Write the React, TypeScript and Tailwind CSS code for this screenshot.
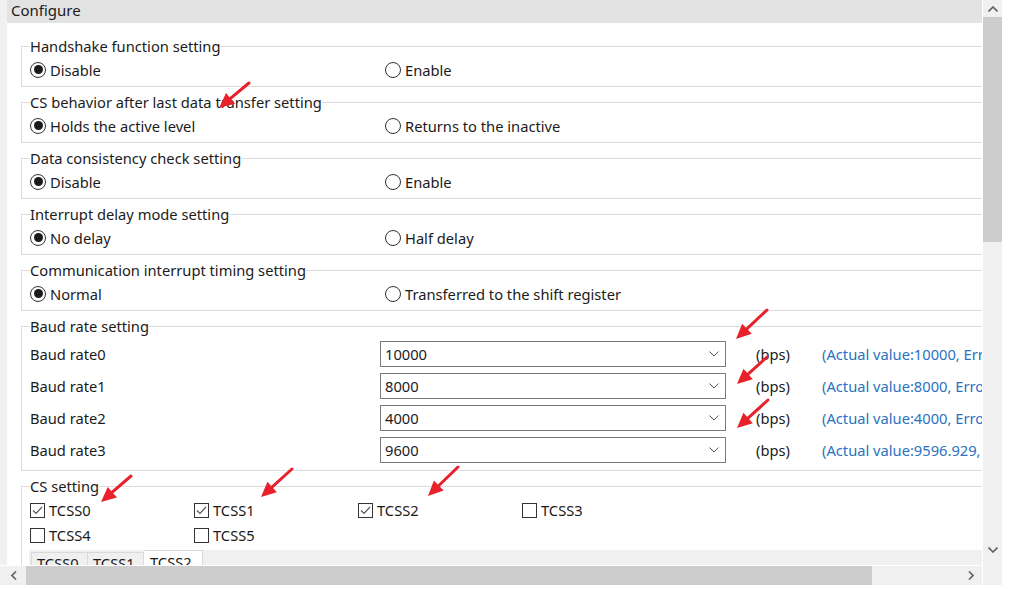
import React from "react";

const radioGroups = [
  { title: "Handshake function setting", a: "Disable", b: "Enable" },
  { title: "CS behavior after last data transfer setting", a: "Holds the active level", b: "Returns to the inactive" },
  { title: "Data consistency check setting", a: "Disable", b: "Enable" },
  { title: "Interrupt delay mode setting", a: "No delay", b: "Half delay" },
  { title: "Communication interrupt timing setting", a: "Normal", b: "Transferred to the shift register" },
];

const baudRates = [
  { label: "Baud rate0", value: "10000", actual: "(Actual value:10000, Error:0%)" },
  { label: "Baud rate1", value: "8000", actual: "(Actual value:8000, Error:0%)" },
  { label: "Baud rate2", value: "4000", actual: "(Actual value:4000, Error:0%)" },
  { label: "Baud rate3", value: "9600", actual: "(Actual value:9596.929, Error:-0.03%)" },
];

const csChecks = [
  { name: "TCSS0", on: true },
  { name: "TCSS1", on: true },
  { name: "TCSS2", on: true },
  { name: "TCSS3", on: false },
  { name: "TCSS4", on: false },
  { name: "TCSS5", on: false },
];

// red annotation arrows: tail -> tip
const arrows = [
  [249, 83, 219, 108],
  [767, 310, 736, 339],
  [767, 357, 737, 384],
  [768, 400, 737, 428],
  [131, 476, 101, 502],
  [292, 469, 261, 497],
  [458, 467, 428, 496],
];

function Radio({ checked, label }: { checked?: boolean; label: string }) {
  return (
    <div className="flex items-center gap-[4px]">
      <span className="flex h-[16px] w-[16px] items-center justify-center rounded-full border border-[#333]">
        {checked && <span className="h-[9px] w-[9px] rounded-full bg-[#1b1b1b]" />}
      </span>
      <span>{label}</span>
    </div>
  );
}

function Check({ checked, label }: { checked?: boolean; label: string }) {
  return (
    <div className="flex items-center gap-[4px]">
      <span className="flex h-[15px] w-[15px] items-center justify-center border border-[#333] bg-white">
        {checked && (
          <svg width="11" height="9" viewBox="0 0 11 9">
            <polyline points="1,4.5 4,7.5 10,1" fill="none" stroke="#555" strokeWidth="1.2" />
          </svg>
        )}
      </span>
      <span>{label}</span>
    </div>
  );
}

function Group({ title, className, children }: { title: string; className: string; children: React.ReactNode }) {
  return (
    <fieldset className={"w-[1000px] shrink-0 border border-[#dcdcdc] pl-[8px] " + className}>
      <legend className="px-0 leading-[20px]">{title}</legend>
      {children}
    </fieldset>
  );
}

function Arrow({ t }: { t: number[] }) {
  const [x1, y1, x2, y2] = t;
  const dx = x2 - x1;
  const dy = y2 - y1;
  const len = Math.hypot(dx, dy);
  const ux = dx / len;
  const uy = dy / len;
  const hl = 15;
  const hw = 7;
  const bx = x2 - ux * hl;
  const by = y2 - uy * hl;
  const p1 = `${bx - uy * hw},${by + ux * hw}`;
  const p2 = `${bx + uy * hw},${by - ux * hw}`;
  return (
    <g>
      <line x1={x1} y1={y1} x2={bx + ux * 2} y2={by + uy * 2} stroke="#e8212b" strokeWidth="3" strokeLinecap="round" />
      <polygon points={`${x2},${y2} ${p1} ${p2}`} fill="#e8212b" />
    </g>
  );
}

export default function App() {
  return (
    <div className="relative h-[589px] w-[1009px] overflow-hidden bg-white font-['Noto_Sans'] text-[14.7px] text-[#1b1b1b]">
      <div className="flex h-[585px] w-[1002px]">
        {/* Left column: panel + horizontal scrollbar */}
        <div className="flex w-[982px] flex-col">
          <div className="flex h-[565px]">
            <div className="w-[7px] shrink-0 bg-[#f0f0f0]" />
            <div className="flex w-[975px] flex-col overflow-hidden bg-white">
              <div className="h-[23px] shrink-0 bg-[#e3e3e3] pl-[4px] text-[15px] leading-[21px]">Configure</div>

              <div className="flex flex-col pl-[14px] pt-[13px]">
                {radioGroups.map((g, i) => (
                  <Group key={i} title={g.title} className={"h-[51px] " + (i > 0 ? "mt-[5px]" : "")}>
                    <div className="flex h-[28px] items-center">
                      <div className="w-[355px]">
                        <Radio checked label={g.a} />
                      </div>
                      <Radio label={g.b} />
                    </div>
                  </Group>
                ))}

                <Group title="Baud rate setting" className="mt-[5px] h-[155px]">
                  <div className="flex flex-col pt-[2px]">
                    {baudRates.map((b) => (
                      <div key={b.label} className="flex h-[32px] items-center">
                        <div className="w-[350px] shrink-0">{b.label}</div>
                        <div className="flex h-[26px] w-[346px] shrink-0 items-center justify-between border border-[#7a7a7a] pl-[4px] pr-[6px]">
                          <span>{b.value}</span>
                          <svg width="10" height="6" viewBox="0 0 10 6">
                            <polyline points="0.5,0.5 5,5 9.5,0.5" fill="none" stroke="#555" strokeWidth="1" />
                          </svg>
                        </div>
                        <div className="ml-[30px] w-[66px] shrink-0">(bps)</div>
                        <div className="whitespace-nowrap text-[#2a72c0]">{b.actual}</div>
                      </div>
                    ))}
                  </div>
                </Group>

                <Group title="CS setting" className="mt-[5px] h-[120px]">
                  <div className="grid w-[656px] grid-cols-4 pt-[2px]">
                    {csChecks.map((c) => (
                      <div key={c.name} className="flex h-[25px] items-center">
                        <Check checked={c.on} label={c.name} />
                      </div>
                    ))}
                  </div>
                  <div className="-ml-[1px] mt-[2px] flex h-[24px] items-start bg-[#f0f0f0] pl-[2px]">
                    <div className="mt-[2px] h-[22px] w-[57px] overflow-hidden border border-b-0 border-[#d9d9d9] pl-[5px] pt-[1px] leading-[18px]">TCSS0</div>
                    <div className="mt-[2px] h-[22px] w-[56px] overflow-hidden border border-b-0 border-l-0 border-[#d9d9d9] pl-[5px] pt-[1px] leading-[18px]">TCSS1</div>
                    <div className="h-[24px] w-[59px] overflow-hidden border border-b-0 border-l-0 border-[#d9d9d9] bg-white pl-[6px] pt-[2px] leading-[18px]">TCSS2</div>
                  </div>
                </Group>
              </div>
            </div>
          </div>

          {/* Horizontal scrollbar */}
          <div className="mt-[1px] flex h-[19px] items-center bg-[#f0f0f0]">
            <div className="flex w-[26px] justify-center pl-[2px]">
              <svg width="6" height="9" viewBox="0 0 6 9">
                <polyline points="5,0.5 1,4.5 5,8.5" fill="none" stroke="#606060" strokeWidth="1.6" />
              </svg>
            </div>
            <div className="h-full w-[846px] bg-[#cdcdcd]" />
            <div className="flex flex-1 justify-end pr-[8px]">
              <svg width="6" height="9" viewBox="0 0 6 9">
                <polyline points="1,0.5 5,4.5 1,8.5" fill="none" stroke="#606060" strokeWidth="1.6" />
              </svg>
            </div>
          </div>
        </div>

        {/* Vertical scrollbar */}
        <div className="ml-[1px] flex w-[19px] flex-col bg-[#f0f0f0]">
          <div className="flex h-[17px] items-center justify-center">
            <svg width="10" height="6" viewBox="0 0 10 6">
              <polyline points="0.5,5.5 5,1 9.5,5.5" fill="none" stroke="#606060" strokeWidth="1.6" />
            </svg>
          </div>
          <div className="h-[225px] bg-[#cdcdcd]" />
          <div className="flex-1" />
          <div className="mb-[27px] flex h-[17px] items-center justify-center">
            <svg width="10" height="6" viewBox="0 0 10 6">
              <polyline points="0.5,0.5 5,5 9.5,0.5" fill="none" stroke="#606060" strokeWidth="1.6" />
            </svg>
          </div>
        </div>
      </div>

      <svg className="pointer-events-none absolute left-0 top-0" width="1009" height="589">
        {arrows.map((a, i) => (
          <Arrow key={i} t={a} />
        ))}
      </svg>
    </div>
  );
}
